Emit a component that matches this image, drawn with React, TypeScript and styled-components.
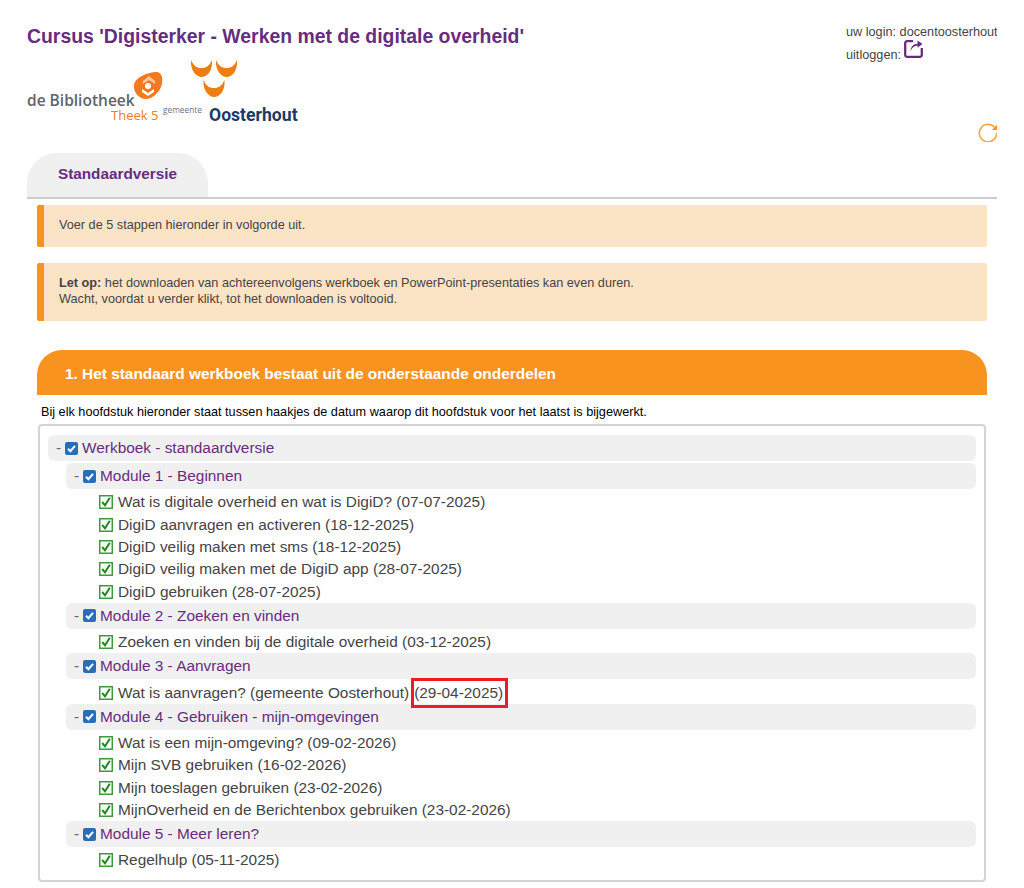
import React from "react";
import styled, { createGlobalStyle } from "styled-components";

const GlobalStyle = createGlobalStyle`
  html, body {
    margin: 0;
    padding: 0;
    background: #fff;
  }
  body {
    font-family: "Liberation Sans", Arial, sans-serif;
    color: #444;
  }
`;

const Page = styled.div`
  width: 970px;
  height: 888px;
  margin-left: 27px;
  overflow: hidden;
`;

const Top = styled.header`
  display: flex;
  justify-content: space-between;
  height: 153px;
`;

const Brand = styled.div`
  padding-top: 26px;
`;

const Title = styled.h1`
  margin: 0;
  font-size: 19.4px;
  line-height: 21px;
  font-weight: bold;
  color: #662d7f;
  white-space: nowrap;
`;

const Logo = styled.svg`
  display: block;
  margin-top: 12px;
`;

const Side = styled.div`
  display: flex;
  flex-direction: column;
  align-items: flex-end;
  padding-top: 24px;
`;

const Login = styled.div`
  width: 151px;
  font-size: 12.7px;
  line-height: 16px;
  white-space: nowrap;
`;

const LogoutIcon = styled.svg`
  vertical-align: 1px;
  margin: -1px 0 0 -1px;
`;

const Refresh = styled.svg`
  margin: 59px -1px 0 0;
`;

const TabBar = styled.div`
  height: 44px;
  border-bottom: 2px solid #ccc;
`;

const Tab = styled.div`
  width: 181px;
  height: 44px;
  box-sizing: border-box;
  padding-top: 13px;
  text-align: center;
  background: #f0f0f0;
  border-radius: 30px 30px 0 0;
  font-size: 15.3px;
  line-height: 16px;
  font-weight: bold;
  color: #662d7f;
`;

const Content = styled.main`
  padding: 0 10px;
`;

const Notice = styled.div<{ $first?: boolean }>`
  margin-top: ${(p) => (p.$first ? "6px" : "16px")};
  padding: 13.25px 15px;
  border-left: 7px solid #f7931e;
  border-radius: 2px;
  background: #fbe3c6;
  font-size: 12.7px;
  line-height: 15.5px;
  color: #444;
`;

const SectionHead = styled.h2`
  margin: 29.5px 0 0;
  height: 45px;
  padding-left: 28px;
  border-radius: 25px 25px 0 0;
  background: #f7931e;
  color: #fff;
  font-size: 15.4px;
  line-height: 47px;
  font-weight: bold;
`;

const Intro = styled.p`
  margin: 10px 0 0 4px;
  font-size: 12.7px;
  line-height: 15px;
  color: #000;
`;

const TreeBox = styled.div`
  margin: 4px 0 0 1px;
  width: 948px;
  box-sizing: border-box;
  height: 458px;
  padding: 9px 8px;
  border: 2px solid #d4d4d4;
  border-radius: 4px;
`;

const GroupRow = styled.div<{ $root?: boolean }>`
  display: flex;
  align-items: center;
  height: 26px;
  margin: 0 0 2px ${(p) => (p.$root ? "0" : "18px")};
  padding-left: 8px;
  border-radius: 6px;
  background: #f0f0f0;
  font-size: 15.4px;
  color: #662d7f;
`;

const Dash = styled.span`
  width: 9px;
  color: #666;
`;

const BlueCheck = styled.svg`
  margin-right: 4px;
`;

const Item = styled.div`
  display: flex;
  align-items: center;
  height: 22.4px;
  padding-left: 51px;
  font-size: 15.4px;
  color: #444;
  white-space: nowrap;
`;

const GreenCheck = styled.svg`
  margin-right: 5px;
`;

const Marked = styled.span`
  margin-left: 5px;
  outline: 3px solid #ed1c24;
  padding: 3px 2px 3px 0;
`;

const modules: { name: string; items: string[] }[] = [
  {
    name: "Module 1 - Beginnen",
    items: [
      "Wat is digitale overheid en wat is DigiD? (07-07-2025)",
      "DigiD aanvragen en activeren (18-12-2025)",
      "DigiD veilig maken met sms (18-12-2025)",
      "DigiD veilig maken met de DigiD app (28-07-2025)",
      "DigiD gebruiken (28-07-2025)",
    ],
  },
  {
    name: "Module 2 - Zoeken en vinden",
    items: ["Zoeken en vinden bij de digitale overheid (03-12-2025)"],
  },
  {
    name: "Module 3 - Aanvragen",
    items: ["Wat is aanvragen? (gemeente Oosterhout)|(29-04-2025)"],
  },
  {
    name: "Module 4 - Gebruiken - mijn-omgevingen",
    items: [
      "Wat is een mijn-omgeving? (09-02-2026)",
      "Mijn SVB gebruiken (16-02-2026)",
      "Mijn toeslagen gebruiken (23-02-2026)",
      "MijnOverheid en de Berichtenbox gebruiken (23-02-2026)",
    ],
  },
  {
    name: "Module 5 - Meer leren?",
    items: ["Regelhulp (05-11-2025)"],
  },
];

function CheckedBox() {
  return (
    <BlueCheck width="13" height="13" viewBox="0 0 13 13">
      <rect width="13" height="13" rx="2" fill="#2b6cb8" />
      <path d="M3 6.8 5.4 9.2 10 3.9" fill="none" stroke="#fff" strokeWidth="2" />
    </BlueCheck>
  );
}

function DoneBox() {
  return (
    <GreenCheck width="14" height="14" viewBox="0 0 14 14">
      <rect x="0.75" y="0.75" width="12.5" height="12.5" fill="#fff" stroke="#3c9a3c" strokeWidth="1.5" />
      <path d="M3.2 7 6 10.4 10.8 2.8" fill="none" stroke="#1c8a1c" strokeWidth="2" />
    </GreenCheck>
  );
}

function ItemRow({ label }: { label: string }) {
  const [text, marked] = label.split("|");
  return (
    <Item>
      <DoneBox />
      {text}
      {marked && <Marked>{marked}</Marked>}
    </Item>
  );
}

const crescent = (x: number, y: number) =>
  `M${x} ${y}C${x - 1} ${y + 11} ${x + 6} ${y + 17} ${x + 10.500} ${y + 17}C${x + 16} ${y + 17} ${x + 22} ${y + 11} ${x + 21} ${y}C${x + 18} ${y + 7} ${x + 14} ${y + 8} ${x + 10.500} ${y + 8}C${x + 7} ${y + 8} ${x + 3} ${y + 7} ${x} ${y}z`;

function LibraryLogo() {
  return (
    <Logo width="272" height="66" viewBox="0 0 272 66">
      <path d="M107 26C108 18 122 13 129 13C135 13 136 19 135 25C133 33 126 40 119 40C112 40 106 33 107 26z" fill="#f47a20" />
      <path d="M116 22l6-5 6 5v3l-6-4-6 4z" fill="#fbc9a0" />
      <circle cx="121" cy="27" r="3" fill="#fff" />
      <path d="M115 30l6 4 6-4v3l-6 4-6-4z" fill="#fff" />
      <text x="0" y="47" fontFamily="Open Sans, sans-serif" fontSize="15.5" fontWeight="600" fill="#5f6468">
        de Bibliotheek
      </text>
      <text x="84" y="61" fontFamily="Open Sans, sans-serif" fontSize="13" fill="#f47a20">
        Theek 5
      </text>
      <text x="136" y="54" fontFamily="Open Sans, sans-serif" fontSize="8.3" fill="#6a6f8a">
        gemeente
      </text>
      <text x="182" y="62" fontFamily="Roboto, sans-serif" fontSize="17.6" fontWeight="bold" fill="#1c3a66">
        Oosterhout
      </text>
      <path d={crescent(164, 1)} fill="#f07d12" />
      <path d={crescent(189, 1)} fill="#f07d12" />
      <path d={crescent(176.5, 21)} fill="#f07d12" />
    </Logo>
  );
}

export default function App() {
  return (
    <Page>
      <GlobalStyle />
      <Top>
        <Brand>
          <Title>Cursus 'Digisterker - Werken met de digitale overheid'</Title>
          <LibraryLogo />
        </Brand>
        <Side>
          <Login>
            uw login: docentoosterhout
            <br />
            uitloggen:{" "}
            <LogoutIcon width="19" height="19" viewBox="0 0 19 19">
              <path d="M9 2.200H3A1.800 1.800 0 0 0 1.200 4v12A1.800 1.800 0 0 0 3 17.800h13a1.800 1.800 0 0 0 1.800-1.800V9" fill="none" stroke="#662d7f" strokeWidth="2.3" />
              <path d="M6.500 12c.3-4.500 3-7 7-7.200V1.500L18.500 5l-5 3.800V6.500c-3 .2-5.500 2-7 5.500z" fill="#662d7f" />
            </LogoutIcon>
          </Login>
          <Refresh width="20" height="20" viewBox="0 0 20 20">
            <path d="M16.500 5.300A8.700 8.700 0 1 0 18.700 11" fill="none" stroke="#f9a94a" strokeWidth="1.700" />
            <path d="M19.300 2.500v5.500h-5.500z" fill="#f7931e" />
          </Refresh>
        </Side>
      </Top>
      <TabBar>
        <Tab>Standaardversie</Tab>
      </TabBar>
      <Content>
        <Notice $first>Voer de 5 stappen hieronder in volgorde uit.</Notice>
        <Notice>
          <b>Let op:</b> het downloaden van achtereenvolgens werkboek en PowerPoint-presentaties kan even duren.
          <br />
          Wacht, voordat u verder klikt, tot het downloaden is voltooid.
        </Notice>
        <SectionHead>1. Het standaard werkboek bestaat uit de onderstaande onderdelen</SectionHead>
        <Intro>Bij elk hoofdstuk hieronder staat tussen haakjes de datum waarop dit hoofdstuk voor het laatst is bijgewerkt.</Intro>
        <TreeBox>
          <GroupRow $root>
            <Dash>-</Dash>
            <CheckedBox />
            Werkboek - standaardversie
          </GroupRow>
          {modules.map((m) => (
            <div key={m.name}>
              <GroupRow>
                <Dash>-</Dash>
                <CheckedBox />
                {m.name}
              </GroupRow>
              {m.items.map((it) => (
                <ItemRow key={it} label={it} />
              ))}
            </div>
          ))}
        </TreeBox>
      </Content>
    </Page>
  );
}
